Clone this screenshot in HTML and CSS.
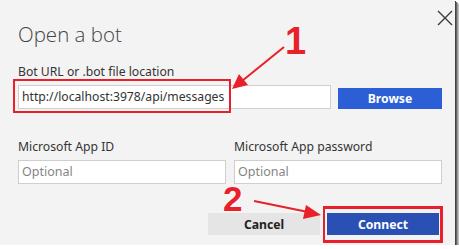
FILE: index.html
```html
<!DOCTYPE html>
<html>
<head>
<meta charset="utf-8">
<link rel="stylesheet" href="styles.css">
</head>
<body>
<div class="dialog">
  <div class="header">
    <h1 class="title">Open a bot</h1>
    <button class="close" aria-label="Close">
      <svg width="16" height="16" viewBox="0 0 16 16"><path d="M1 1 L15 15 M15 1 L1 15" stroke="#3a3a3a" stroke-width="1.4" fill="none"/></svg>
    </button>
  </div>
  <label class="label first">Bot URL or .bot file location</label>
  <div class="url-row">
    <div class="input url">http://localhost:3978/api/messages</div>
    <button class="btn primary browse">Browse</button>
  </div>
  <div class="cols">
    <div class="col">
      <label class="label">Microsoft App ID</label>
      <div class="input placeholder">Optional</div>
    </div>
    <div class="col">
      <label class="label">Microsoft App password</label>
      <div class="input placeholder">Optional</div>
    </div>
  </div>
  <div class="footer">
    <button class="btn secondary">Cancel</button>
    <button class="btn primary connect">Connect</button>
  </div>

  <div class="mark box1"></div>
  <div class="mark box2"></div>
  <span class="num num1">1</span>
  <span class="num num2">2</span>
  <svg class="arrows" width="455" height="245" viewBox="0 0 455 245">
    <line x1="284" y1="47" x2="242" y2="81" stroke="#e8202a" stroke-width="2"/>
    <polygon points="232,89 239,74 248,85" fill="#e8202a"/>
    <line x1="254" y1="201" x2="308" y2="212" stroke="#e8202a" stroke-width="2"/>
    <polygon points="321,215 306,205 303,219" fill="#e8202a"/>
  </svg>
</div>
</body>
</html>
```
FILE: styles.css
```css
* { box-sizing: border-box; }
html, body { margin: 0; padding: 0; background: #ffffff; }
body { font-family: "Noto Sans", "Open Sans", sans-serif; color: #333; }

.dialog {
  position: relative;
  width: 455px;
  height: 245px;
  background: #f3f3f3;
  padding: 19px 13px 0 18px;
  box-shadow: 1px 1px 0 #444, 2px 2px 0 #666, 3px 3px 1px #999, 4px 4px 1px #c8c8c8;
}

.header {
  display: flex;
  justify-content: space-between;
  align-items: flex-start;
  margin-right: -11px;
  height: 30px;
}
.title {
  margin: 0;
  font-family: "Open Sans", sans-serif;
  font-weight: 300;
  font-size: 20.5px;
  line-height: 31px;
  color: #444;
}
.close {
  margin-top: -9px;
  padding: 0;
  border: 0;
  background: none;
  width: 16px;
  height: 16px;
  display: block;
}
.close svg { display: block; }

.label {
  display: block;
  font-size: 12.2px;
  line-height: 16px;
  color: #333;
  white-space: nowrap;
}
.label.first { margin-top: 15px; }

.url-row {
  display: flex;
  align-items: flex-end;
  gap: 7px;
  margin-top: 5px;
}
.input {
  height: 24px;
  background: #fff;
  border: 1px solid #cfcfcf;
  font-size: 12.2px;
  line-height: 22px;
  padding-left: 3px;
  color: #333;
  white-space: nowrap;
  overflow: hidden;
}
.input.url { width: 313px; }
.input.placeholder { color: #858585; font-size: 12.5px; }

.btn {
  border: 0;
  font-family: "Noto Sans", "Open Sans", sans-serif;
  font-weight: 700;
  font-size: 12.2px;
  padding: 0;
  height: 22px;
  width: 112px;
}
.btn.primary { background: #2c5fd5; color: #fff; }
.btn.browse { width: 104px; height: 21px; }
.btn.connect { background: #2a50b3; }
.btn.secondary { background: #e5e5e5; color: #222; }

.cols {
  display: grid;
  grid-template-columns: 208px 208px;
  column-gap: 8px;
  margin-top: 30px;
}
.col .input { margin-top: 5px; }

.footer {
  display: flex;
  justify-content: flex-end;
  gap: 7px;
  margin-top: 29px;
  margin-right: 3px;
}

.mark { position: absolute; border: 2px solid #e8202a; }
.box1 { left: 13px; top: 79px; width: 218px; height: 34px; }
.box2 { left: 323px; top: 206px; width: 120px; height: 37px; border-width: 3px 3px 3px 2px; }

.num {
  position: absolute;
  font-family: "Liberation Sans", Arial, sans-serif;
  font-weight: 700;
  color: #e8202a;
  line-height: 1;
}
.num1 { left: 285px; top: 22px; font-size: 38px; }
.num2 { left: 223px; top: 181px; font-size: 35px; }

.arrows { position: absolute; left: 0; top: 0; pointer-events: none; }
```
